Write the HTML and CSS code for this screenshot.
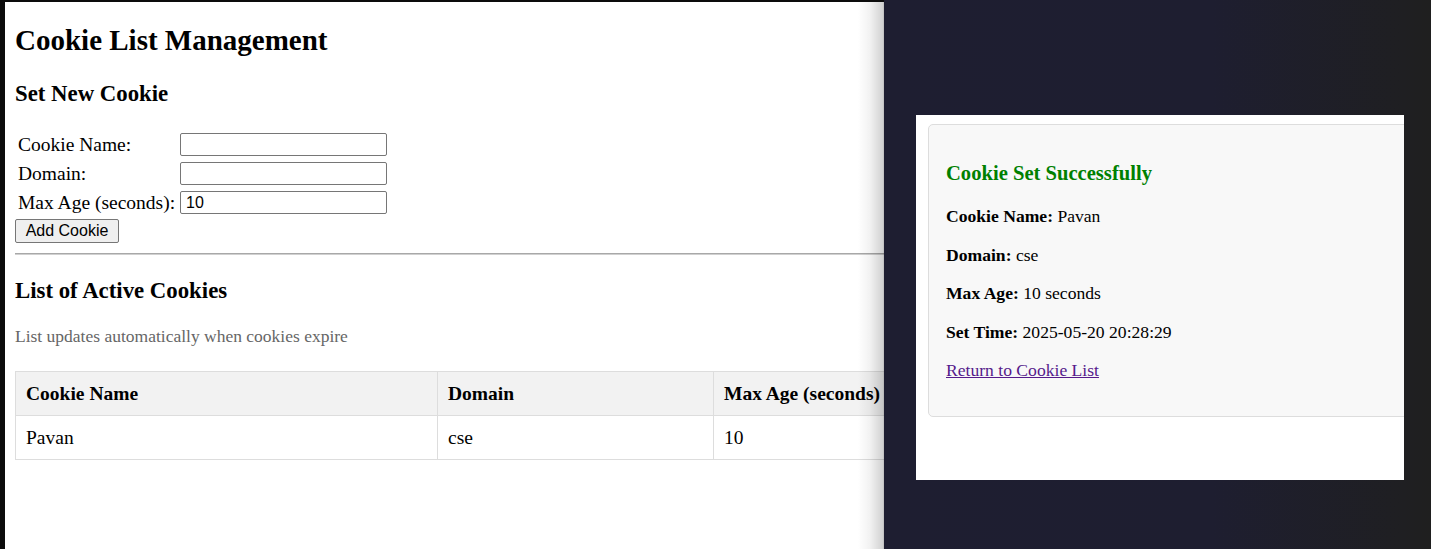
FILE: index.html
```html
<!DOCTYPE html>
<html>
<head>
<meta charset="utf-8">
<title>Cookie List Management</title>
<link rel="stylesheet" href="styles.css">
</head>
<body>
<div class="screen">
  <div class="left-window">
    <div class="page">
      <h2 class="title">Cookie List Management</h2>
      <h3 class="section">Set New Cookie</h3>
      <form class="cookie-form">
        <label class="lbl">Cookie Name:</label>
        <input class="field" type="text" value="">
        <label class="lbl">Domain:</label>
        <input class="field" type="text" value="">
        <label class="lbl">Max Age (seconds):</label>
        <input class="field" type="text" value="10">
      </form>
      <button class="add-btn" type="button">Add Cookie</button>
      <div class="rule"></div>
      <h3 class="section list-title">List of Active Cookies</h3>
      <p class="note">List updates automatically when cookies expire</p>
      <table class="cookies">
        <colgroup>
          <col class="c1"><col class="c2"><col class="c3">
        </colgroup>
        <thead>
          <tr><th>Cookie Name</th><th>Domain</th><th>Max Age (seconds)</th></tr>
        </thead>
        <tbody>
          <tr><td>Pavan</td><td>cse</td><td>10</td></tr>
        </tbody>
      </table>
    </div>
  </div>
  <div class="right-window">
    <div class="panel">
      <div class="card">
        <h3 class="ok">Cookie Set Successfully</h3>
        <p class="info"><strong>Cookie Name:</strong> Pavan</p>
        <p class="info"><strong>Domain:</strong> cse</p>
        <p class="info"><strong>Max Age:</strong> 10 seconds</p>
        <p class="info"><strong>Set Time:</strong> 2025-05-20 20:28:29</p>
        <p class="info"><a class="back" href="#">Return to Cookie List</a></p>
      </div>
    </div>
  </div>
</div>
</body>
</html>
```
FILE: styles.css
```css
html, body {
  margin: 0;
  padding: 0;
}
body {
  width: 1431px;
  height: 549px;
  overflow: hidden;
  background: #1f1f1f;
  font-family: "Liberation Serif", "Times New Roman", serif;
}
.screen {
  display: flex;
  width: 1431px;
  height: 549px;
}
.left-window {
  position: relative;
  width: 879px;
  flex: 0 0 879px;
  height: 547px;
  border-left: 5px solid #0c0c0c;
  border-top: 2px solid #0c0c0c;
  background: #ffffff;
  overflow: hidden;
}
.left-window::after {
  content: "";
  position: absolute;
  top: 0;
  right: 0;
  width: 26px;
  height: 100%;
  background: linear-gradient(to right, rgba(0,0,0,0) 0%, rgba(0,0,0,0.05) 45%, rgba(0,0,0,0.18) 96%, rgba(0,0,0,0.28) 100%);
}
.page {
  padding: 21px 0 0 10px;
  font-size: 19.5px;
  color: #000;
}
.title {
  margin: 0;
  font-size: 29px;
  line-height: 34px;
  font-weight: bold;
}
.section {
  margin: 24px 0 0 0;
  font-size: 22.8px;
  line-height: 26px;
  font-weight: bold;
}
.cookie-form {
  display: grid;
  grid-template-columns: 165px 207px;
  grid-auto-rows: 23px;
  row-gap: 6px;
  margin-top: 26px;
}
.lbl {
  padding-left: 3px;
  line-height: 23px;
  white-space: nowrap;
}
.field {
  box-sizing: border-box;
  width: 207px;
  height: 23px;
  margin: 0;
  padding: 1px 5px;
  border: 1px solid #767676;
  border-radius: 2px;
  background: #fff;
  font-family: "Liberation Sans", Arial, sans-serif;
  font-size: 16px;
  color: #000;
}
.add-btn {
  display: block;
  box-sizing: border-box;
  width: 104px;
  height: 24px;
  margin: 5px 0 0 0;
  padding: 0;
  border: 1px solid #767676;
  border-radius: 2px;
  background: #efefef;
  font-family: "Liberation Sans", Arial, sans-serif;
  font-size: 16px;
  color: #000;
}
.rule {
  margin-top: 10px;
  height: 0;
  border-top: 1px solid #a8a8a8;
  border-bottom: 1px solid #d0d0d0;
}
.list-title {
  margin-top: 23px;
}
.note {
  margin: 22px 0 0 0;
  font-size: 17.5px;
  line-height: 20px;
  color: #666;
}
.cookies {
  margin-top: 25px;
  border-collapse: collapse;
  table-layout: fixed;
  width: 1000px;
  font-size: 19.5px;
}
.c1 { width: 422px; }
.c2 { width: 276px; }
.c3 { width: 302px; }
.cookies th,
.cookies td {
  border: 1px solid #dddddd;
  padding: 10px 10px;
  line-height: 23px;
  text-align: left;
  white-space: nowrap;
}
.cookies th {
  background: #f2f2f2;
  font-weight: bold;
}
.right-window {
  flex: 1 1 auto;
  height: 549px;
  background: linear-gradient(to right, #1e1e31 0%, #1e1e30 60%, #1f1f22 95%, #1f1f1f 100%);
  display: flex;
  flex-direction: column;
  align-items: flex-start;
}
.panel {
  box-sizing: border-box;
  width: 488px;
  height: 365px;
  margin: 115px 0 0 32px;
  padding: 9px 0 0 12px;
  background: #ffffff;
  overflow: hidden;
}
.card {
  box-sizing: border-box;
  width: 520px;
  height: 293px;
  padding: 20px 17px 0 17px;
  border: 1px solid #dddddd;
  border-radius: 5px;
  background: #f8f8f8;
  font-size: 17.6px;
  color: #000;
}
.ok {
  margin: 16px 0 0 0;
  font-size: 20.6px;
  line-height: 24px;
  font-weight: bold;
  color: #008000;
}
.info {
  margin: 18.5px 0 0 0;
  line-height: 20px;
  white-space: nowrap;
}
.ok + .info {
  margin-top: 21px;
}
.back {
  color: #551a8b;
  text-decoration: underline;
}
```
